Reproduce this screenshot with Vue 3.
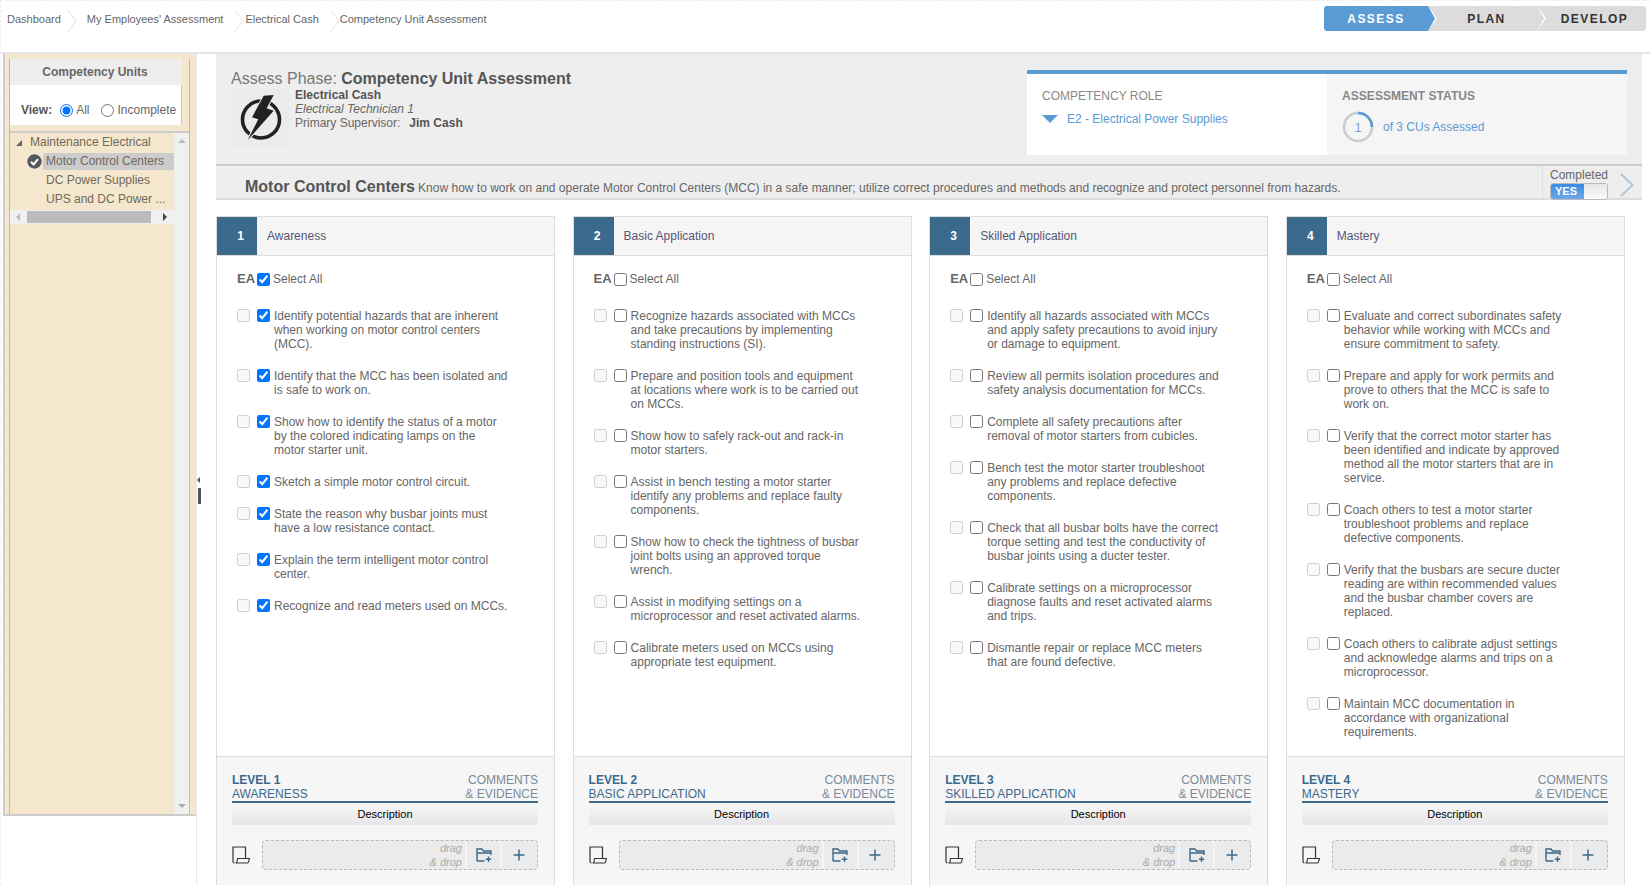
<script setup>
const crumbs = ["Dashboard", "My Employees' Assessment", "Electrical Cash", "Competency Unit Assessment"];
const steps = [
  { label: "ASSESS", cls: "on" },
  { label: "PLAN", cls: "mid" },
  { label: "DEVELOP", cls: "last" },
];
const tree = ["DC Power Supplies", "UPS and DC Power ..."];
const columns = [
  {
    n: 1, name: "Awareness", upper: "AWARENESS", checked: true,
    items: [
      "Identify potential hazards that are inherent\nwhen working on motor control centers\n(MCC).",
      "Identify that the MCC has been isolated and\nis safe to work on.",
      "Show how to identify the status of a motor\nby the colored indicating lamps on the\nmotor starter unit.",
      "Sketch a simple motor control circuit.",
      "State the reason why busbar joints must\nhave a low resistance contact.",
      "Explain the term intelligent motor control\ncenter.",
      "Recognize and read meters used on MCCs.",
    ],
  },
  {
    n: 2, name: "Basic Application", upper: "BASIC APPLICATION", checked: false,
    items: [
      "Recognize hazards associated with MCCs\nand take precautions by implementing\nstanding instructions (SI).",
      "Prepare and position tools and equipment\nat locations where work is to be carried out\non MCCs.",
      "Show how to safely rack-out and rack-in\nmotor starters.",
      "Assist in bench testing a motor starter\nidentify any problems and replace faulty\ncomponents.",
      "Show how to check the tightness of busbar\njoint bolts using an approved torque\nwrench.",
      "Assist in modifying settings on a\nmicroprocessor and reset activated alarms.",
      "Calibrate meters used on MCCs using\nappropriate test equipment.",
    ],
  },
  {
    n: 3, name: "Skilled Application", upper: "SKILLED APPLICATION", checked: false,
    items: [
      "Identify all hazards associated with MCCs\nand apply safety precautions to avoid injury\nor damage to equipment.",
      "Review all permits isolation procedures and\nsafety analysis documentation for MCCs.",
      "Complete all safety precautions after\nremoval of motor starters from cubicles.",
      "Bench test the motor starter troubleshoot\nany problems and replace defective\ncomponents.",
      "Check that all busbar bolts have the correct\ntorque setting and test the conductivity of\nbusbar joints using a ducter tester.",
      "Calibrate settings on a microprocessor\ndiagnose faults and reset activated alarms\nand trips.",
      "Dismantle repair or replace MCC meters\nthat are found defective.",
    ],
  },
  {
    n: 4, name: "Mastery", upper: "MASTERY", checked: false,
    items: [
      "Evaluate and correct subordinates safety\nbehavior while working with MCCs and\nensure commitment to safety.",
      "Prepare and apply for work permits and\nprove to others that the MCC is safe to\nwork on.",
      "Verify that the correct motor starter has\nbeen identified and indicate by approved\nmethod all the motor starters that are in\nservice.",
      "Coach others to test a motor starter\ntroubleshoot problems and replace\ndefective components.",
      "Verify that the busbars are secure ducter\nreading are within recommended values\nand the busbar chamber covers are\nreplaced.",
      "Coach others to calibrate adjust settings\nand acknowledge alarms and trips on a\nmicroprocessor.",
      "Maintain MCC documentation in\naccordance with organizational\nrequirements.",
    ],
  },
];
</script>

<template>
  <div class="page">
    <header class="top">
      <nav class="crumbs">
        <template v-for="(c, i) in crumbs" :key="c">
          <span class="crumb" :class="'c' + i">{{ c }}</span>
          <svg v-if="i < 3" class="sep" width="10" height="22" viewBox="0 0 10 22"><path d="M1 0 L9 11 L1 22" fill="none" stroke="#dde1ea" stroke-width="1"/></svg>
        </template>
      </nav>
      <div class="steps">
        <div v-for="s in steps" :key="s.label" class="step" :class="s.cls">{{ s.label }}</div>
      </div>
    </header>

    <div class="content">
      <aside class="side">
        <div class="side-box">
          <div class="side-title">Competency Units</div>
          <div class="view">
            <b>View:</b>
            <input type="radio" name="v" checked class="r1" />
            <span>All</span>
            <input type="radio" name="v" class="r2" />
            <span>Incomplete</span>
          </div>
          <div class="tree-wrap">
            <div class="tree">
              <div class="rows">
                <div class="row root"><span class="tri"></span>Maintenance Electrical</div>
                <div class="row sel">
                  <svg class="ok" width="15" height="15" viewBox="0 0 15 15"><circle cx="7.5" cy="7.5" r="7.2" fill="#55595e"/><path d="M4 7.8 L6.6 10.4 L11 5.2" fill="none" stroke="#fff" stroke-width="2"/></svg>
                  <span class="sel-label">Motor Control Centers</span>
                </div>
                <div v-for="t in tree" :key="t" class="row leaf">{{ t }}</div>
              </div>
              <div class="hbar">
                <span class="ha left"></span>
                <span class="thumb"></span>
                <span class="ha right"></span>
              </div>
            </div>
            <div class="vbar">
              <span class="va up"></span>
              <span class="va down"></span>
            </div>
          </div>
        </div>
      </aside>

      <div class="split">
        <span class="grip-arrow"></span>
        <span class="grip"></span>
      </div>

      <main class="main">
        <section class="head">
          <div class="head-left">
            <h1><span>Assess Phase:</span> <b>Competency Unit Assessment</b></h1>
            <div class="person">
              <div class="logo">
                <svg width="58" height="58" viewBox="-2 0 58 58">
                  <circle cx="28" cy="31.5" r="18.5" fill="none" stroke="#222" stroke-width="3.6"/>
                  <path d="M30.7 7.7 L40.7 7 L33.7 20.3 L40.7 22.7 L14.7 52 L25.3 31.3 L19 29.3 Z" fill="#222" stroke="#ececec" stroke-width="2" paint-order="stroke"/>
                </svg>
              </div>
              <div class="who">
                <b>Electrical Cash</b>
                <i>Electrical Technician 1</i>
                <span>Primary Supervisor:<b class="sup">Jim Cash</b></span>
              </div>
            </div>
          </div>
          <div class="cards">
            <div class="card role">
              <h3>COMPETENCY ROLE</h3>
              <div class="role-v"><span class="down-tri"></span>E2 - Electrical Power Supplies</div>
            </div>
            <div class="card status">
              <h3 class="sp">ASSESSMENT STATUS</h3>
              <div class="status-v">
                <svg width="32" height="32" viewBox="0 0 32 32">
                  <circle cx="16" cy="16" r="14" fill="none" stroke="#ccc" stroke-width="2.6"/>
                  <path d="M16 2 A14 14 0 0 1 30 16" fill="none" stroke="#5b9bd5" stroke-width="2.6"/>
                  <text x="16" y="20.5" text-anchor="middle" font-size="12" fill="#7a9cc8" font-family="Liberation Sans">1</text>
                </svg>
                <span>of 3 CUs Assessed</span>
              </div>
            </div>
          </div>
        </section>

        <section class="band">
          <div class="band-text"><b>Motor Control Centers</b> Know how to work on and operate Motor Control Centers (MCC) in a safe manner; utilize correct procedures and methods and recognize and protect personnel from hazards.</div>
          <div class="done">
            <span class="done-l">Completed</span>
            <div class="toggle"><span class="yes">YES</span><span class="knob"></span></div>
          </div>
          <svg class="next" width="14" height="24" viewBox="0 0 14 24"><path d="M1 1 L12.5 12 L1 23" fill="none" stroke="#b4c6d4" stroke-width="2"/></svg>
        </section>

        <section class="cols">
          <article v-for="c in columns" :key="c.n" class="col">
            <div class="col-head">
              <span class="num">{{ c.n }}</span>
              <span class="col-name">{{ c.name }}</span>
            </div>
            <div class="col-body">
              <div class="all">
                <b>EA</b>
                <input type="checkbox" :checked="c.checked" />
                <span>Select All</span>
              </div>
              <div v-for="it in c.items" :key="it" class="item">
                <input type="checkbox" disabled />
                <input type="checkbox" :checked="c.checked" />
                <p>{{ it }}</p>
              </div>
            </div>
            <div class="col-foot">
              <div class="lv">
                <div class="lv-l"><b>LEVEL {{ c.n }}</b><span>{{ c.upper }}</span></div>
                <div class="lv-r"><span>COMMENTS</span><span>&amp; EVIDENCE</span></div>
              </div>
              <div class="desc">Description</div>
              <div class="ev">
                <svg class="doc" width="18" height="18" viewBox="0 0 18 18">
                  <path d="M13.5 12 V1 H1 V15.5 Q1 17 2.5 17" fill="none" stroke="#333" stroke-width="1.2"/>
                  <path d="M5.5 12.5 H17.5 L16.5 16 Q16 17 15 17 H3.5 Q5 17 5 15.5 Z" fill="#f6f6f6" stroke="#333" stroke-width="1.1"/>
                </svg>
                <div class="drop">
                  <span class="dd">drag<br />&amp; drop</span>
                  <span class="btn">
                    <svg width="16" height="14" viewBox="0 0 16 14">
                      <path d="M1 13 V1 H6 L7.5 3 H15 V7 M1 5 H15 M1 13 H8.5" fill="none" stroke="#3b6a8c" stroke-width="1.4"/>
                      <path d="M12.5 8.5 V14 M9.8 11.2 H15.2" fill="none" stroke="#3b6a8c" stroke-width="1.4"/>
                    </svg>
                  </span>
                  <span class="btn">
                    <svg width="12" height="12" viewBox="0 0 12 12"><path d="M6 0.5 V11.5 M0.5 6 H11.5" fill="none" stroke="#3b6a8c" stroke-width="1.5"/></svg>
                  </span>
                </div>
              </div>
            </div>
          </article>
        </section>
      </main>
    </div>
  </div>
</template>

<style scoped>
.page {
  width: 1650px;
  height: 885px;
  overflow: hidden;
  box-sizing: border-box;
  background: #fff;
  color: #666;
  font: 12px/14px "Liberation Sans", Arial, sans-serif;
  border-top: 1px dashed #eee;
  border-left: 1px dashed #eee;
}
.top {
  height: 51px;
  display: flex;
  justify-content: space-between;
  border-bottom: 2px solid #e4e4e4;
  box-sizing: content-box;
}
.crumbs {
  display: flex;
  align-items: flex-start;
  padding: 9px 0 0 6px;
  font-size: 11px;
  color: #666;
}
.crumb { line-height: 18px; white-space: nowrap; }
.sep { margin: 0 0 0 6px; }
.c0 + .sep { margin-right: 10px; }
.c1 + .sep { margin: 0 1px 0 11px; }
.c2 + .sep { margin: 0 0 0 11px; }
.steps {
  display: flex;
  margin: 5px 4px 0 0;
  height: 25px;
}
.step {
  position: relative;
  height: 25px;
  line-height: 26px;
  text-align: center;
  font-weight: bold;
  letter-spacing: 1.45px;
  background: #dcdcdc;
  color: #333;
}
.step.on {
  width: 104px;
  background: #5b9bd5;
  color: #fff;
  border-radius: 3px 0 0 3px;
  z-index: 2;
}
.step.mid { width: 101px; padding-left: 8px; z-index: 1; }
.step.last { width: 103px; padding-left: 6px; border-radius: 0 3px 3px 0; }
.step.on::before,
.step.mid::before {
  content: "";
  position: absolute;
  left: 100%;
  top: 0;
  width: 9px;
  height: 25px;
  background: #fff;
  clip-path: polygon(0 0, 100% 50%, 0 100%);
}
.step.on::after,
.step.mid::after {
  content: "";
  position: absolute;
  left: 100%;
  top: 0;
  width: 7px;
  height: 25px;
  clip-path: polygon(0 0, 100% 50%, 0 100%);
}
.step.on::after { background: #5b9bd5; }
.step.mid::after { background: #dcdcdc; }
.content { display: flex; height: 832px; }
.side {
  width: 193px;
  margin-left: 2px;
  height: 762px;
  box-sizing: border-box;
  background: #f4e7cd;
  border-left: 2px solid #ccc;
  border-bottom: 2px solid #ccc;
  padding: 5px 6px 0 4px;
  flex: none;
}
.side-box {
  height: 755px;
  box-sizing: border-box;
  border: 1px solid #bbb;
  border-width: 0 1px 0 1px;
  display: flex;
  flex-direction: column;
}
.side-title {
  height: 26px;
  width: 172px;
  box-sizing: border-box;
  padding-right: 2px;
  line-height: 26px;
  text-align: center;
  font-weight: bold;
  background: #eee;
}
.view {
  height: 40px;
  width: 172px;
  box-sizing: border-box;
  background: #fff;
  border-right: 1px solid #ccc;
  display: flex;
  align-items: center;
  padding: 10px 0 0 11px;
  white-space: nowrap;
}
.view b { color: #555; }
.view input { margin: 0; width: 13px; height: 13px; flex: none; }
.r1 { margin-left: 8px !important; margin-right: 3px !important; }
.r2 { margin-left: 12px !important; margin-right: 3px !important; }
.tree-wrap {
  flex: 1;
  margin-top: 6px;
  border-top: 2px solid #ccc;
  display: flex;
  min-height: 0;
}
.tree { width: 164px; flex: none; }
.row {
  height: 19px;
  line-height: 19px;
  white-space: nowrap;
  color: #6f6a5c;
  position: relative;
}
.root { padding-left: 20px; }
.tri {
  position: absolute;
  left: 6px;
  top: 7px;
  width: 0;
  height: 0;
  border-left: 6px solid transparent;
  border-bottom: 6px solid #666;
}
.sel { display: flex; align-items: center; padding-left: 17px; }
.ok { flex: none; }
.sel-label {
  flex: 1;
  margin-left: 1px;
  padding-left: 3px;
  height: 17px;
  line-height: 17px;
  background: #ccc;
  border-radius: 3px 0 0 3px;
}
.leaf { padding-left: 36px; }
.hbar {
  height: 14px;
  margin-top: 1px;
  background: #f0f0f0;
  position: relative;
}
.thumb {
  position: absolute;
  left: 17px;
  top: 1px;
  width: 124px;
  height: 12px;
  background: #bbb;
}
.ha { position: absolute; top: 3px; width: 0; height: 0; border-top: 4px solid transparent; border-bottom: 4px solid transparent; }
.ha.left { left: 6px; border-right: 4px solid #bbb; }
.ha.right { right: 7px; border-left: 4px solid #444; }
.vbar {
  flex: 1;
  background: #f0f0f0;
  display: flex;
  flex-direction: column;
  justify-content: space-between;
  align-items: center;
  padding: 6px 0 6px;
}
.va { width: 0; height: 0; border-left: 4px solid transparent; border-right: 4px solid transparent; }
.va.up { border-bottom: 4px solid #bbb; }
.va.down { border-top: 4px solid #aaa; }
.split {
  width: 20px;
  flex: none;
  position: relative;
  box-sizing: border-box;
  border-left: 1px solid #e8e8e8;
}
.grip-arrow {
  position: absolute;
  left: 0;
  top: 423px;
  width: 0;
  height: 0;
  border-top: 3px solid transparent;
  border-bottom: 3px solid transparent;
  border-right: 3px solid #555;
}
.grip {
  position: absolute;
  left: 1px;
  top: 434px;
  width: 3px;
  height: 16px;
  background: #555;
}
.main { width: 1426px; flex: none; }
.head {
  height: 112px;
  box-sizing: border-box;
  background: #eee;
  border-bottom: 2px solid #ccc;
  display: flex;
  justify-content: space-between;
  padding: 16px 15px 9px 15px;
}
h1 { margin: 0; font-size: 16px; line-height: 18px; font-weight: normal; color: #777; }
h1 b { color: #555; }
.person { display: flex; }
.logo {
  width: 58px;
  height: 58px;
  background: #ebebeb;
  flex: none;
}
.logo svg { display: block; }
.who { display: flex; flex-direction: column; margin: 0 0 0 6px; color: #666; }
.who > b { color: #555; }
.sup { margin-left: 9px; color: #555; }
.cards {
  width: 600px;
  display: flex;
  border-top: 4px solid #5b9bd5;
  box-sizing: border-box;
  height: 85px;
}
.card { width: 300px; box-sizing: border-box; padding: 14px 15px; background: #fff; }
.status { background: #f5f5f5; }
h3 { margin: 0; font-size: 12px; line-height: 16px; font-weight: normal; color: #888; }
h3.sp { font-weight: bold; letter-spacing: .05px; }
.role-v { margin-top: 8px; color: #5b9bd5; display: flex; align-items: center; }
.down-tri {
  width: 0;
  height: 0;
  border-left: 8px solid transparent;
  border-right: 8px solid transparent;
  border-top: 8px solid #5b9bd5;
  margin-right: 9px;
}
.status-v { display: flex; align-items: center; gap: 9px; margin-top: 7px; color: #5b9bd5; }
.band {
  height: 34px;
  box-sizing: border-box;
  background: #eee;
  border-bottom: 2px solid #ddd;
  display: flex;
  align-items: stretch;
}
.band-text { flex: 1; padding: 13px 0 0 29px; white-space: nowrap; color: #666; line-height: 16px; }
.band-text b { font-size: 16px; color: #555; }
.done {
  width: 78px;
  box-sizing: border-box;
  border-left: 1px solid #ddd;
  padding: 1px 0 0 7px;
  color: #666;
  flex: none;
}
.done-l { display: block; line-height: 16px; }
.toggle {
  display: flex;
  width: 58px;
  height: 17px;
  box-sizing: border-box;
  border: 1px solid #bbb;
  border-radius: 3px;
  overflow: hidden;
}
.yes {
  width: 33px;
  background: linear-gradient(#3a8be6, #6fa8e6);
  color: #fff;
  font-size: 11px;
  font-weight: bold;
  line-height: 15px;
  padding-left: 4px;
  box-sizing: border-box;
}
.knob { flex: 1; background: linear-gradient(#e6e6e6, #fafafa); }
.next { margin: 7px 8px 0 0; flex: none; }
.cols {
  display: grid;
  grid-template-columns: repeat(4, 339px);
  column-gap: 17.6px;
  margin-top: 16px;
}
.col {
  height: 680px;
  box-sizing: border-box;
  border: 1px solid #ddd;
  display: flex;
  flex-direction: column;
}
.col-head {
  height: 38px;
  flex: none;
  background: #f5f5f5;
  border-bottom: 1px solid #ddd;
  display: flex;
  align-items: center;
  box-sizing: content-box;
}
.num {
  width: 40px;
  height: 38px;
  box-sizing: border-box;
  padding-left: 7px;
  line-height: 38px;
  text-align: center;
  color: #fff;
  font-weight: bold;
  background: #3b6a8c;
}
.col-name { margin-left: 10px; color: #557; }
.col-body { flex: 1; min-height: 0; padding: 13px 0 0 20px; }
.all { display: flex; align-items: center; height: 20px; margin-bottom: 20px; }
.all b { font-size: 13px; width: 20px; color: #666; }
.all input { margin: 0 3px 0 0; width: 13px; height: 13px; }
.item { display: flex; align-items: flex-start; margin-bottom: 18px; }
.item input { margin: 0; width: 13px; height: 13px; flex: none; }
.item input:first-child { margin-right: 7px; }
.item p { margin: 0 0 0 4px; white-space: pre-line; color: #666; }
.col-foot {
  height: 139px;
  flex: none;
  box-sizing: border-box;
  background: #f6f6f6;
  border-top: 1px solid #ddd;
  padding: 16px 16px 0 15px;
}
.lv {
  display: flex;
  justify-content: space-between;
  border-bottom: 2px solid #3b6a8c;
  color: #3b6a8c;
  height: 28px;
  box-sizing: content-box;
}
.lv-l, .lv-r { display: flex; flex-direction: column; }
.lv-r { align-items: flex-end; color: #7a8a99; }
.desc {
  height: 22px;
  line-height: 22px;
  text-align: center;
  color: #000;
  font-size: 11px;
  background: linear-gradient(#f8f8f8, #e6e6e8);
}
.ev { display: flex; align-items: center; margin-top: 15px; }
.doc { flex: none; }
.drop {
  margin-left: 12px;
  flex: 1;
  height: 30px;
  box-sizing: border-box;
  background: #ebebeb;
  border: 1px dashed #bbb;
  border-radius: 4px;
  padding-right: 2px;
  display: flex;
  justify-content: flex-end;
  align-items: stretch;
}
.dd { text-align: right; font-style: italic; font-size: 11px; color: #aaa; line-height: 14px; margin-right: 3px; }
.btn {
  width: 33px;
  display: flex;
  align-items: center;
  justify-content: center;
  border-left: 2px solid #f4f4f4;
}
</style>
